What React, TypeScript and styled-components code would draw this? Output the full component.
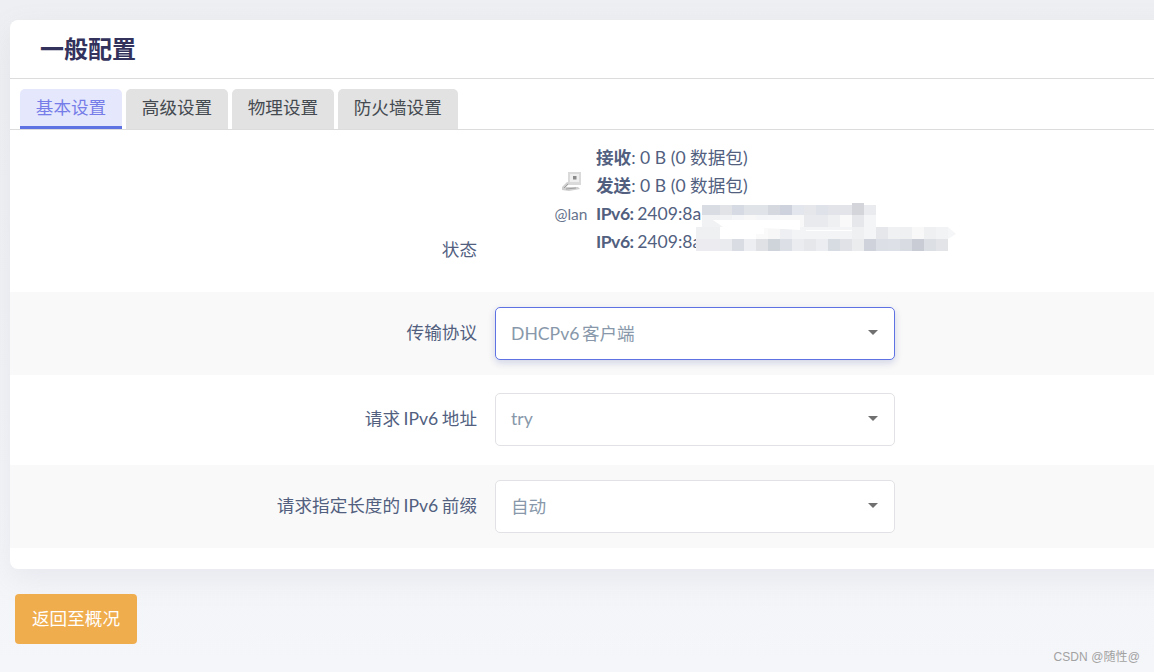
import React from "react";
import styled, { createGlobalStyle } from "styled-components";

const GlobalStyle = createGlobalStyle`
  html, body {
    margin: 0;
    height: 672px;
    overflow: hidden;
    background: #f3f4f7;
  }
  body {
    font-family: Lato, "Noto Sans CJK SC", sans-serif;
  }
`;

const Page = styled.div`
  position: relative;
  height: 672px;
  padding-top: 20px;
  box-sizing: border-box;
  background: linear-gradient(#eeeff2, #f5f6f9);
  overflow: hidden;
`;

const Card = styled.section`
  width: 1190px;
  margin-left: 10px;
  height: 549px;
  background: #fff;
  border-radius: 8px;
  box-shadow: 0 10px 30px rgba(136, 152, 170, 0.12);
`;

const Title = styled.h2`
  margin: 0;
  height: 59px;
  padding: 0 0 3px 30px;
  box-sizing: border-box;
  display: flex;
  align-items: center;
  font-size: 24px;
  font-weight: 700;
  color: #32325d;
  border-bottom: 1px solid #dcdcdc;
`;

const Tabs = styled.ul`
  list-style: none;
  margin: 10px 0 0;
  padding: 0 0 0 10px;
  height: 41px;
  box-sizing: border-box;
  display: flex;
  gap: 4px;
  border-bottom: 1px solid #dcdcdc;
`;

const Tab = styled.li<{ $active?: boolean }>`
  height: 40px;
  padding: 0 15.8px 3px;
  box-sizing: border-box;
  display: flex;
  align-items: center;
  font-size: 17.6px;
  border-radius: 5px 5px 0 0;
  color: ${(p) => (p.$active ? "#767de8" : "#444a50")};
  background: ${(p) => (p.$active ? "#e5e8fc" : "#e2e2e2")};
  border-bottom: 3px solid ${(p) => (p.$active ? "#5e72e4" : "#e2e2e2")};
`;

const Row = styled.div<{ $shade?: boolean; $height: number; $top?: number }>`
  height: ${(p) => p.$height}px;
  box-sizing: border-box;
  padding-top: ${(p) => p.$top ?? 15}px;
  display: grid;
  grid-template-columns: 467px 400px;
  column-gap: 18px;
  align-items: start;
  background: ${(p) => (p.$shade ? "#f9f9f9" : "#fff")};
`;

const Label = styled.label<{ $low?: boolean }>`
  text-align: right;
  font-size: 17.6px;
  line-height: 52px;
  word-spacing: -1px;
  color: #525f7f;
  margin-top: ${(p) => (p.$low ? 80 : 0)}px;
`;

const Select = styled.div<{ $focus?: boolean }>`
  height: 53px;
  box-sizing: border-box;
  padding: 0 15px 2px;
  display: flex;
  align-items: center;
  justify-content: space-between;
  font-size: 17.6px;
  word-spacing: -2px;
  color: #8898aa;
  background: #fff;
  border-radius: 5px;
  border: 1px solid ${(p) => (p.$focus ? "#5e72e4" : "#e2e2e6")};
  box-shadow: ${(p) => (p.$focus ? "0 3px 9px rgba(50, 50, 93, 0.1), 0 3px 6px rgba(94, 114, 228, 0.12)" : "none")};
`;

const Caret = styled.span`
  width: 0;
  height: 0;
  margin-right: 1px;
  border-left: 5px solid transparent;
  border-right: 5px solid transparent;
  border-top: 5px solid #707070;
`;

const Status = styled.div`
  position: relative;
  display: flex;
  width: 440px;
  margin-left: 59px;
`;

const Device = styled.div`
  width: 34px;
  margin-right: 8px;
  display: flex;
  flex-direction: column;
  align-items: center;
  padding-top: 28px;
  color: #67748e;
  font-size: 15.5px;
  line-height: 18px;
  gap: 13px;
`;

const Lines = styled.div`
  font-size: 17.6px;
  line-height: 28px;
  color: #525f7f;
  white-space: nowrap;
`;

const Addr = styled.div`
  word-spacing: -1px;
  b {
    letter-spacing: -0.5px;
  }
`;

const Mosaic = styled.svg`
  position: absolute;
  left: 142px;
  top: 59px;
`;

const BackButton = styled.button`
  display: block;
  margin: 25px 0 0 15px;
  width: 122px;
  height: 50px;
  padding: 0 0 4px;
  border: none;
  border-radius: 4px;
  background: #f0ad4e;
  color: #fff;
  font: inherit;
  font-size: 17.6px;
`;

const Watermark = styled.span`
  position: absolute;
  right: 14px;
  bottom: 8px;
  font-family: "Liberation Sans", "Noto Sans CJK SC", sans-serif;
  font-size: 12px;
  letter-spacing: 0.1px;
  color: #a2a2a2;
`;

const DeviceIcon = () => (
  <svg width="20" height="20" viewBox="0 0 20 20">
    <rect x="7" y="0" width="13" height="13" fill="#dadada" />
    <rect x="9" y="2" width="9" height="8" fill="#efefef" />
    <rect x="12" y="4" width="3.5" height="3.5" fill="#8a8a8a" />
    <path d="M1 15 L6 10 L9 11 L5 15 L17 15 L19 17 L8 19 L1 18 Z" fill="#cfcfcf" />
    <path d="M3 16 L7 12 M5 17 L15 16" stroke="#a0a0a0" strokeWidth="1" fill="none" />
  </svg>
);

// pixelated block that hides the addresses: [x, y, colours left to right]
const mosaicRows: [number, number, string[]][] = [
  [6, 2, ["d9dce3"]],
  [12, 2, ["d9dce3", "e1e3e6", "d6dae2", "e0e3e8", "e0e3e8", "d5d8de", "cdd2dc", "e3e6ec", "e6e7ea", "dfe2e8", "e3e4ea", "e3e4ea", "d3d5db", "e9ebef"]],
  [156, 0, ["d3d5db"]],
  [6, 12, ["f1f2f4"]],
  [12, 12, ["f1f2f4", "f2f3f5", "f5f6f7", "f8f8f9", "f5f6f8", "f6f7f8", "f8f8f8", "f8f8f8", "e9eaed", "e9eaee", "eef0f2", "f9f9fa", "e6e7eb", "f4f5f7"]],
  [0, 24, ["eff0f2", "eff0f2", "fff", "fff", "fff", "fafafa", "f7f7f8", "eeeff2", "f3f4f6", "f3f4f6", "f3f4f6", "f3f4f6", "f3f4f6", "eff0f2", "f4f5f6", "e6e7eb", "f0f1f3", "eff0f2", "f8f8f9", "eff0f2", "f2f3f4"]],
  [0, 36, ["ececf0", "ececf0", "e9ebee", "d9dce3", "eceef1", "dfe1e5", "cfd4db", "dcdfe5", "eaecef", "e6e7ea", "ebedf0", "d7dbe2", "e0e2e8", "ebecee", "cfd2da", "dcdfe5", "dde0e6", "d8dbe2", "c9ccd5", "dcdfe3", "e3e4e8"]],
];

const Blur = () => (
  <Mosaic width="262" height="50" viewBox="0 0 262 50" shapeRendering="crispEdges">
    {mosaicRows.map(([x, y, colors]) =>
      colors.map((c, i) => (
        <rect key={`${x}-${y}-${i}`} x={x + i * 12} y={y} width="12" height="12" fill={`#${c}`} />
      ))
    )}
    <polygon points="17,17 104,17 104,27 68,25 68,31 37,31" fill="#fff" shapeRendering="auto" />
    <rect x="110" y="27" width="46" height="1" fill="#fff" />
    <polygon points="252,24 260,31 252,36" fill="#f5f6f8" shapeRendering="auto" />
  </Mosaic>
);

export default function App() {
  return (
    <Page>
      <GlobalStyle />
      <Card>
        <Title>一般配置</Title>
        <Tabs>
          <Tab $active>基本设置</Tab>
          <Tab>高级设置</Tab>
          <Tab>物理设置</Tab>
          <Tab>防火墙设置</Tab>
        </Tabs>
        <Row $height={162} $top={14}>
          <Label $low>状态</Label>
          <Status>
            <Device>
              <DeviceIcon />
              @lan
            </Device>
            <Lines>
              <div><b>接收</b>: 0 B (0 数据包)</div>
              <div><b>发送</b>: 0 B (0 数据包)</div>
              <Addr><b>IPv6:</b> 2409:8a</Addr>
              <Addr><b>IPv6:</b> 2409:8a</Addr>
            </Lines>
            <Blur />
          </Status>
        </Row>
        <Row $shade $height={83}>
          <Label>传输协议</Label>
          <Select $focus>
            DHCPv6 客户端
            <Caret />
          </Select>
        </Row>
        <Row $height={90} $top={18}>
          <Label>请求 IPv6 地址</Label>
          <Select>
            try
            <Caret />
          </Select>
        </Row>
        <Row $shade $height={83}>
          <Label>请求指定长度的 IPv6 前缀</Label>
          <Select>
            自动
            <Caret />
          </Select>
        </Row>
      </Card>
      <BackButton>返回至概况</BackButton>
      <Watermark>CSDN @随性@</Watermark>
    </Page>
  );
}
